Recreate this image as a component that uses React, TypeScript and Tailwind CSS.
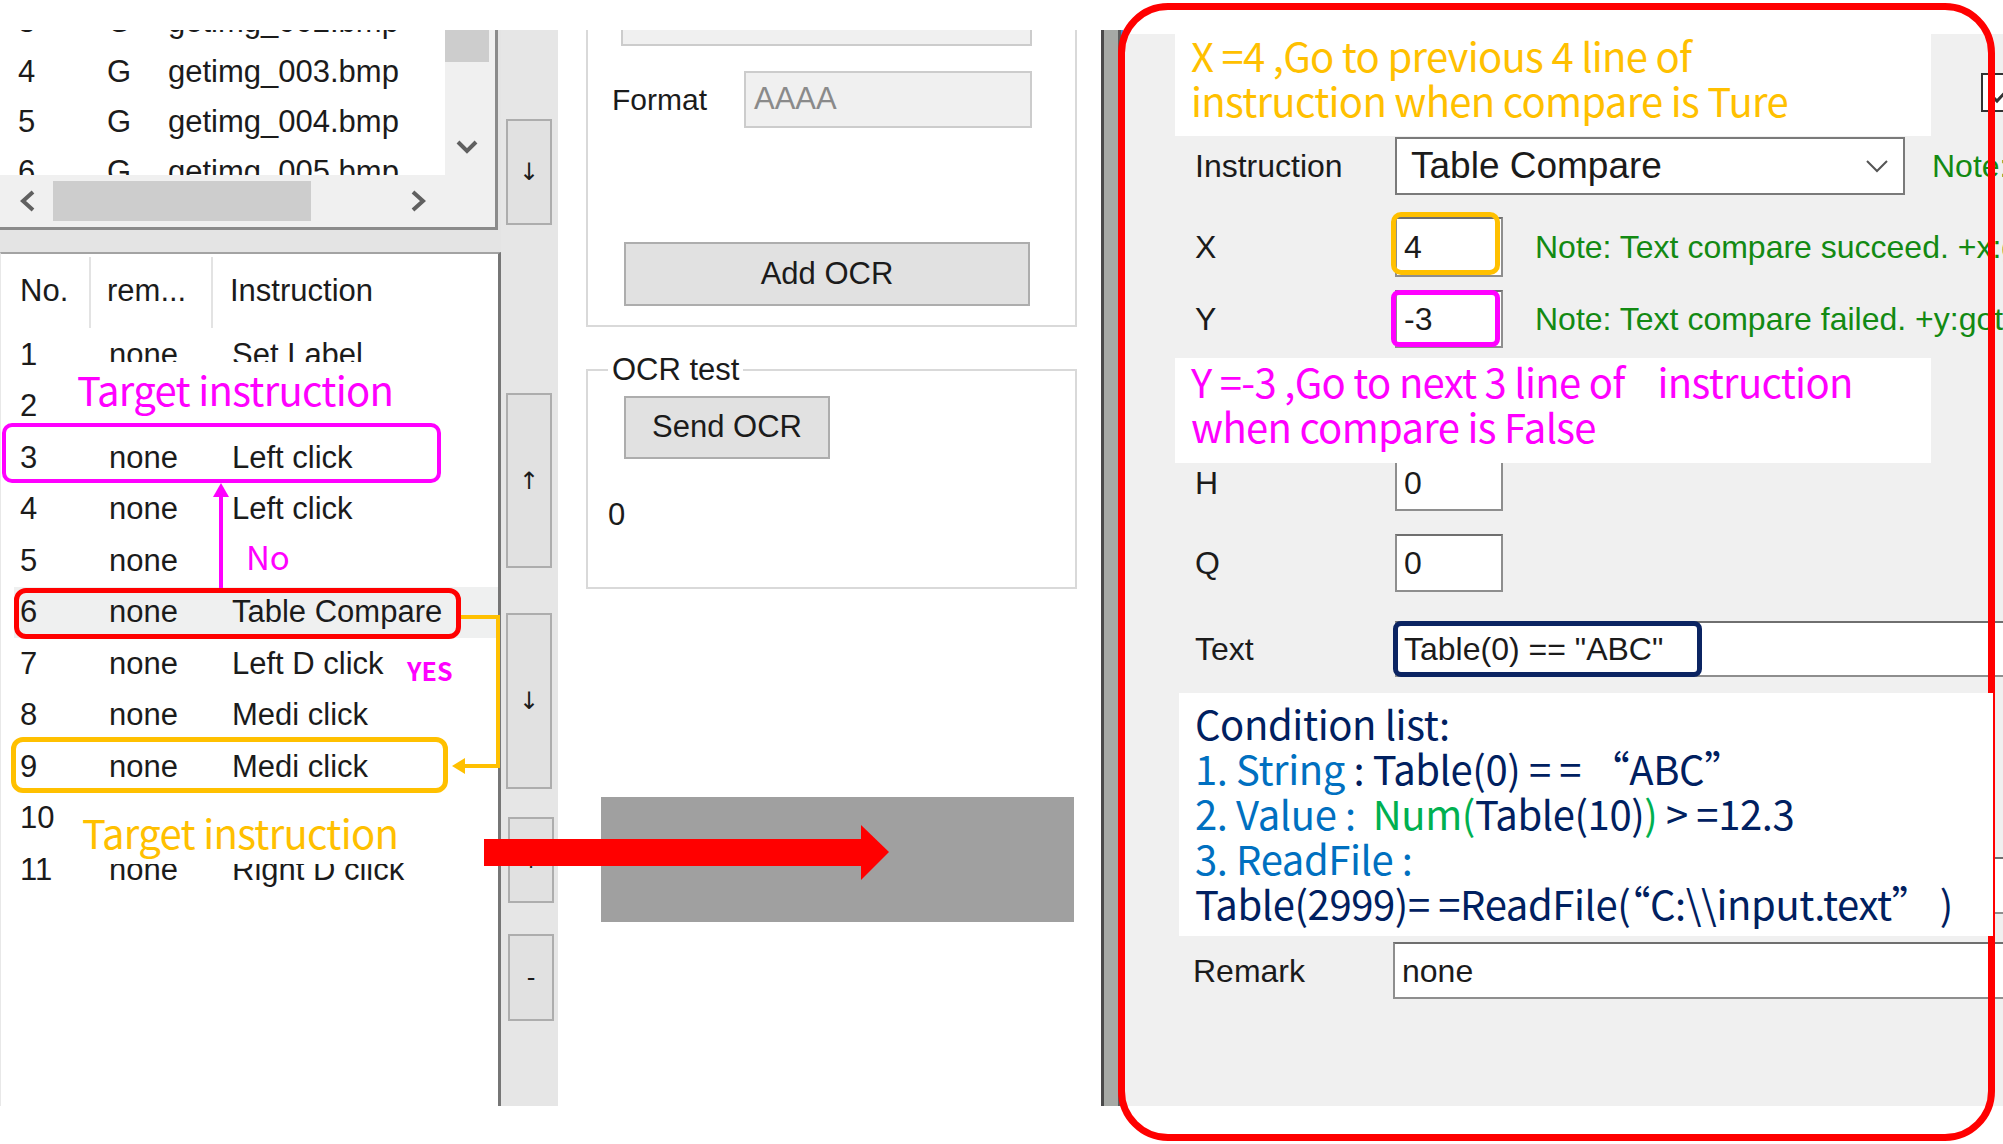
import React from "react";

const ANN = "font-['Noto_Sans_CJK_TC','Noto_Sans',sans-serif] whitespace-nowrap";

function WinButton({ className, children }: { className: string; children?: React.ReactNode }) {
  return (
    <div className={`flex items-center justify-center bg-[#e1e1e1] border-2 border-[#adadad] text-[#1b1b1b] shrink-0 ${className}`}>
      {children}
    </div>
  );
}

const topRows = [
  ["3", "G", "getimg_002.bmp"],
  ["4", "G", "getimg_003.bmp"],
  ["5", "G", "getimg_004.bmp"],
  ["6", "G", "getimg_005.bmp"],
];

const rows = [
  ["1", "none", "Set Label"],
  ["2", "none", "Left click"],
  ["3", "none", "Left click"],
  ["4", "none", "Left click"],
  ["5", "none", ""],
  ["6", "none", "Table Compare"],
  ["7", "none", "Left D click"],
  ["8", "none", "Medi click"],
  ["9", "none", "Medi click"],
  ["10", "none", "Right click"],
  ["11", "none", "Right D click"],
];

function LeftPanel() {
  return (
    <div className="w-[501px] shrink-0 flex flex-col bg-[#e4e4e4]">
      {/* top file list */}
      <div className="w-[498px] h-[200px] flex flex-col border-r-[3px] border-b-[3px] border-[#8b8b8b] bg-[#f0f0f0]">
        <div className="flex h-[145px]">
          <div className="w-[445px] shrink-0 bg-white overflow-hidden">
            <div className="mt-[-33px]">
              {topRows.map((r) => (
                <div key={r[0]} className="flex h-[50px] items-center text-[31px] whitespace-nowrap">
                  <span className="w-[107px] shrink-0 pl-[18px]">{r[0]}</span>
                  <span className="w-[61px] shrink-0">{r[1]}</span>
                  <span>{r[2]}</span>
                </div>
              ))}
            </div>
          </div>
          <div className="flex-1 flex flex-col">
            <div className="w-[44px] h-[32px] bg-[#cdcdcd]" />
            <div className="flex justify-center w-[44px] mt-[78px]">
              <svg width="22" height="14" viewBox="0 0 22 14">
                <polyline points="2,2 11,11 20,2" fill="none" stroke="#606060" strokeWidth="4" />
              </svg>
            </div>
          </div>
        </div>
        <div className="h-[52px] flex items-center">
          <svg className="ml-[20px] shrink-0" width="16" height="22" viewBox="0 0 16 22">
            <polyline points="13,2 3,11 13,20" fill="none" stroke="#606060" strokeWidth="4" />
          </svg>
          <div className="ml-[17px] w-[258px] h-[40px] shrink-0 bg-[#cdcdcd]" />
          <svg className="ml-[99px] shrink-0" width="16" height="22" viewBox="0 0 16 22">
            <polyline points="3,2 13,11 3,20" fill="none" stroke="#606060" strokeWidth="4" />
          </svg>
        </div>
      </div>
      <div className="h-[22px] shrink-0" />
      {/* lower instruction list */}
      <div className="flex-1 bg-white border-t-2 border-[#a3a3a3] border-r-[3px] border-r-[#767676] border-l border-l-[#e8e8e8]">
        <div className="flex h-[75px] text-[31px]">
          <div className="w-[88px] shrink-0 pl-[19px] flex items-center">No.</div>
          <div className="w-[2px] shrink-0 bg-[#e3e3e3] mt-[3px] h-[71px]" />
          <div className="w-[120px] shrink-0 pl-[16px] flex items-center">rem...</div>
          <div className="w-[2px] shrink-0 bg-[#e3e3e3] mt-[3px] h-[71px]" />
          <div className="pl-[17px] flex items-center">Instruction</div>
        </div>
        {rows.map((r) =>
          r[0] === "6" ? (
            <div key={r[0]} className="flex h-[51.5px] items-center text-[31px] whitespace-nowrap">
              <div className="ml-[13px] flex-1 h-full flex items-center bg-[#eff0f0]">
                <span className="w-[77px] shrink-0 pl-[6px]">{r[0]}</span>
                <span className="w-[122px] shrink-0 pl-[18px]">{r[1]}</span>
                <span className="pl-[19px]">{r[2]}</span>
              </div>
            </div>
          ) : (
            <div key={r[0]} className="flex h-[51.5px] items-center text-[31px] whitespace-nowrap">
              <span className="w-[90px] shrink-0 pl-[19px]">{r[0]}</span>
              <span className="w-[122px] shrink-0 pl-[18px]">{r[1]}</span>
              <span className="pl-[19px]">{r[2]}</span>
            </div>
          )
        )}
      </div>
    </div>
  );
}

function ButtonColumn() {
  return (
    <div className="w-[57px] shrink-0 bg-[#e6e6e6] flex flex-col pl-[5px] font-['DejaVu_Sans',sans-serif] text-[24px]">
      <WinButton className="mt-[89px] w-[46px] h-[106px]">↓</WinButton>
      <WinButton className="mt-[168px] w-[46px] h-[175px]">↑</WinButton>
      <WinButton className="mt-[45px] w-[46px] h-[176px]">↓</WinButton>
      <WinButton className="mt-[28px] ml-[2px] w-[46px] h-[86px]">+</WinButton>
      <WinButton className="mt-[31px] ml-[2px] w-[46px] h-[87px]">-</WinButton>
    </div>
  );
}

function MiddlePanel() {
  return (
    <div className="w-[543px] shrink-0 bg-white flex flex-col pl-[28px]">
      <div className="w-[491px] h-[297px] border-x-2 border-b-2 border-[#d9d9d9] flex flex-col">
        <div className="ml-[33px] w-[411px] h-[16px] bg-[#f0f0f0] border-x-2 border-b-2 border-[#cccccc]" />
        <div className="mt-[25px] flex items-center h-[57px]">
          <span className="ml-[24px] w-[132px] shrink-0 text-[30px]">Format</span>
          <div className="w-[288px] h-[57px] shrink-0 bg-[#f0f0f0] border-2 border-[#cccccc] flex items-center pl-[8px] text-[31px] text-[#8a8a8a]">
            AAAA
          </div>
        </div>
        <WinButton className="mt-[114px] ml-[36px] w-[406px] h-[64px] text-[31px]">Add OCR</WinButton>
      </div>
      <fieldset className="mt-[25px] w-[491px] h-[237px] border-2 border-[#d9d9d9] flex flex-col">
        <legend className="ml-[20px] px-[4px] text-[31px] leading-[36px]">OCR test</legend>
        <WinButton className="mt-[8px] ml-[36px] w-[206px] h-[63px] text-[31px]">Send OCR</WinButton>
        <div className="mt-[38px] ml-[20px] text-[31px] leading-[36px]">0</div>
      </fieldset>
      <div className="mt-[208px] ml-[15px] w-[473px] h-[125px] bg-[#a0a0a0]" />
    </div>
  );
}

function Separator() {
  return (
    <div className="w-[22px] shrink-0 flex">
      <div className="w-[3px] bg-[#4a4a4a]" />
      <div className="w-[14px] bg-[#a6a9a5]" />
      <div className="w-[3px] bg-[#5c5c5c]" />
      <div className="w-[2px] bg-[#3d8de0]" />
    </div>
  );
}

function RightPanel() {
  const label = "w-[272px] shrink-0 pl-[72px] text-[32px]";
  const note = "ml-[32px] shrink-0 text-[32px] text-[#138a13] whitespace-nowrap";
  const input = "shrink-0 bg-white border-2 border-[#8e8e8e] border-t-[#6f6f6f] flex items-center pl-[7px] text-[32px] whitespace-nowrap";
  return (
    <div className="w-[880px] shrink-0 bg-[#f0f0f0] flex flex-col mt-[4px] overflow-hidden">
      <div className="h-[103px] pl-[858px] pt-[39px]">
        <div className="w-[39px] h-[39px] bg-white border-2 border-[#333333] flex items-center justify-center">
          <svg width="30" height="26" viewBox="0 0 30 26">
            <polyline points="3,13 11,21 27,4" fill="none" stroke="#333" strokeWidth="3" />
          </svg>
        </div>
      </div>
      <div className="flex items-center h-[58px]">
        <span className={label}>Instruction</span>
        <div className="w-[510px] h-[58px] shrink-0 bg-white border-2 border-[#7a7a7a] flex items-center pl-[14px] pr-[14px] text-[37px] whitespace-nowrap">
          <span className="flex-1">Table Compare</span>
          <svg width="24" height="14" viewBox="0 0 24 14">
            <polyline points="2,2 12,12 22,2" fill="none" stroke="#555" strokeWidth="2" />
          </svg>
        </div>
        <span className="ml-[27px] shrink-0 text-[32px] text-[#138a13] whitespace-nowrap">Note: select an instruction</span>
      </div>
      <div className="flex items-center h-[60px] mt-[22px]">
        <span className={label}>X</span>
        <div className={`${input} w-[108px] h-[60px]`}>4</div>
        <span className={note}>Note: Text compare succeed. +x:goto previous line</span>
      </div>
      <div className="flex items-center h-[58px] mt-[13px]">
        <span className={label}>Y</span>
        <div className={`${input} w-[108px] h-[58px]`}>-3</div>
        <span className={note}>Note: Text compare failed. +y:goto previous line</span>
      </div>
      <div className="flex items-center h-[57px] mt-[106px]">
        <span className={label}>H</span>
        <div className={`${input} w-[108px] h-[57px]`}>0</div>
      </div>
      <div className="flex items-center h-[58px] mt-[23px]">
        <span className={label}>Q</span>
        <div className={`${input} w-[108px] h-[58px]`}>0</div>
      </div>
      <div className="flex items-center h-[56px] mt-[29px]">
        <span className={label}>Text</span>
        <div className={`${input} w-[620px] h-[56px] border-r-0`}>Table(0) == "ABC"</div>
      </div>
      <div className="flex items-center h-[57px] mt-[180px]">
        <span className={label}></span>
        <div className={`${input} w-[620px] h-[57px] border-r-0`} />
      </div>
      <div className="flex items-center h-[57px] mt-[28px]">
        <span className="w-[270px] shrink-0 pl-[70px] text-[32px]">Remark</span>
        <div className={`${input} w-[620px] h-[57px] border-r-0`}>none</div>
      </div>
    </div>
  );
}

function Annotations() {
  return (
    <>
      {/* left side */}
      <div className={`absolute left-[72px] top-[362px] w-[328px] h-[54px] bg-white pl-[5px] text-[40px] tracking-[-0.7px] leading-[54px] text-[#ff00ff] ${ANN}`}>
        Target instruction
      </div>
      <div className="absolute left-[2px] top-[423px] w-[439px] h-[60px] border-[4px] border-[#ff00ff] rounded-[10px]" />
      <svg className="absolute left-0 top-0" width="1000" height="1144" viewBox="0 0 1000 1144">
        <line x1="221" y1="590" x2="221" y2="494" stroke="#ff00ff" strokeWidth="4" />
        <polygon points="221,483 213,497 229,497" fill="#ff00ff" />
        <polyline points="461,617 498,617 498,766 462,766" fill="none" stroke="#ffc000" strokeWidth="4" />
        <polygon points="452,766 465,758 465,774" fill="#ffc000" />
      </svg>
      <div className={`absolute left-[246px] top-[536px] text-[33px] leading-[40px] text-[#ff00ff] ${ANN}`}>No</div>
      <div className="absolute left-[14px] top-[588px] w-[447px] h-[51px] border-[5px] border-[#ff0000] rounded-[12px]" />
      <div className={`absolute left-[407px] top-[654px] text-[25px] leading-[32px] font-bold text-[#ff00ff] ${ANN}`}>YES</div>
      <div className="absolute left-[11px] top-[737px] w-[437px] h-[56px] border-[5px] border-[#ffc000] rounded-[12px]" />
      <div className={`absolute left-[75px] top-[802px] w-[325px] h-[62px] bg-white pl-[7px] text-[40px] tracking-[-0.7px] leading-[60px] text-[#ffc000] ${ANN}`}>
        Target instruction
      </div>
      <svg className="absolute left-[480px] top-[820px]" width="420" height="70" viewBox="0 0 420 70">
        <rect x="4" y="19" width="378" height="27" fill="#ff0000" />
        <polygon points="381,5 409,32 381,60" fill="#ff0000" />
      </svg>

      {/* right side */}
      <div className={`absolute left-[1175px] top-[33px] w-[756px] h-[103px] bg-white pl-[16px] text-[40px] tracking-[-0.7px] leading-[45px] text-[#ffc000] whitespace-pre ${ANN}`}>
        <div>X =4 ,Go to previous 4 line of</div>
        <div>instruction when compare is Ture</div>
      </div>
      <div className={`absolute left-[1175px] top-[358px] w-[756px] h-[105px] bg-white pl-[16px] pt-[1px] text-[40px] tracking-[-0.7px] leading-[45px] text-[#ff00ff] whitespace-pre ${ANN}`}>
        <div>Y =-3 ,Go to next 3 line of    instruction</div>
        <div>when compare is False</div>
      </div>
      <div className="absolute left-[1391px] top-[212px] w-[109px] h-[63px] border-[5px] border-[#ffc000] rounded-[10px]" />
      <div className="absolute left-[1391px] top-[290px] w-[109px] h-[57px] border-[5px] border-[#ff00ff] rounded-[8px]" />
      <div className="absolute left-[1393px] top-[621px] w-[309px] h-[56px] border-[5px] border-[#0b2462] rounded-[8px]" />
      <div className="absolute left-[1118px] top-[3px] w-[877px] h-[1138px] border-[7px] border-[#ff0000] rounded-[50px]" />
      <div className={`absolute left-[1179px] top-[693px] w-[814px] h-[243px] bg-white pl-[16px] pt-[8px] text-[40px] tracking-[-0.4px] leading-[45px] text-[#002060] whitespace-pre ${ANN}`}>
        <div>Condition list:</div>
        <div>
          <span className="text-[#0070c0]">1. String </span>: Table(0) = = “ABC”
        </div>
        <div>
          <span className="text-[#0070c0]">2. Value :</span>  <span className="text-[#00b050]">Num(</span>Table(10)<span className="text-[#00b050]">)</span> &gt; =12.3
        </div>
        <div className="text-[#0070c0]">3. ReadFile :</div>
        <div>{"Table(2999)= =ReadFile(“C:\\\\input.text” )"}</div>
      </div>
    </>
  );
}

export default function App() {
  return (
    <div className="relative w-[2003px] h-[1144px] overflow-hidden bg-white font-['Liberation_Sans',Arial,sans-serif] text-[#1b1b1b]">
      <div className="flex mt-[30px] h-[1076px]">
        <LeftPanel />
        <ButtonColumn />
        <MiddlePanel />
        <Separator />
        <RightPanel />
      </div>
      <Annotations />
    </div>
  );
}
